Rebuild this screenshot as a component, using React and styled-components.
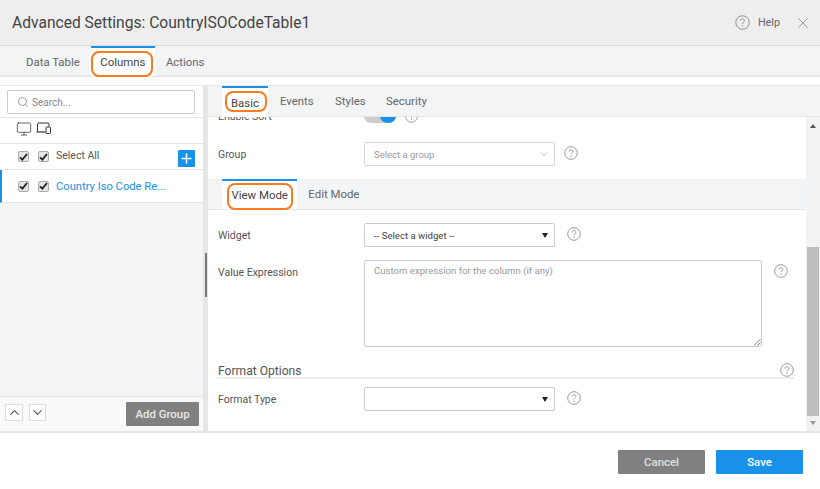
import styled, { createGlobalStyle } from "styled-components"
import { Search, Monitor, X, ChevronUp, ChevronDown, Plus } from "lucide-react"

const GlobalStyle = createGlobalStyle`
  html, body {
    margin: 0;
    padding: 0;
    background: #fff;
    overflow: hidden;
  }
  * {
    box-sizing: border-box;
  }
  body {
    font-family: Roboto, "Liberation Sans", sans-serif;
    color: #444;
  }
`

function HelpIcon({ size = 15 }) {
  return (
    <HelpSvg width={size} height={size} viewBox="0 0 16 16">
      <circle cx="8" cy="8" r="7.2" fill="none" stroke="#8a8a8a" strokeWidth="1" />
      <path d="M5.9 6.2c0-1.3 1-2 2.1-2s2.1.7 2.1 1.9c0 1.7-2.1 1.7-2.1 3.5" fill="none" stroke="#8a8a8a" strokeWidth="1" />
      <circle cx="8" cy="11.6" r=".7" fill="#8a8a8a" />
    </HelpSvg>
  )
}

function DevicesIcon() {
  return (
    <svg width="15" height="13" viewBox="0 0 15 13">
      <path d="M1.5 9.5V2a1 1 0 0 1 1-1h9.5a1 1 0 0 1 1 1v2.5" fill="none" stroke="#333" strokeWidth="1" />
      <path d="M.5 10h9" stroke="#333" strokeWidth="1.2" />
      <rect x="10" y="5" width="4.5" height="6.5" rx=".8" fill="none" stroke="#333" strokeWidth="1" />
    </svg>
  )
}

function Check() {
  return (
    <CheckBox>
      <svg width="9" height="8" viewBox="0 0 9 8">
        <path d="M1 4.3 3.4 6.6 8 1" fill="none" stroke="#222" strokeWidth="1.8" />
      </svg>
    </CheckBox>
  )
}

export default function App() {
  return (
    <Page>
      <GlobalStyle />
      <Header>
        <Title>Advanced Settings: CountryISOCodeTable1</Title>
        <HeaderRight>
          <HelpIcon size={15} />
          <HelpLabel>Help</HelpLabel>
          <CloseBtn><X size={18} strokeWidth={0.8} color="#666" /></CloseBtn>
        </HeaderRight>
      </Header>

      <MainTabs>
        <MainTab>Data Table</MainTab>
        <MainTab $active>
          Columns
          <Oval $l={0} $t={3} $w={62} $h={26} />
        </MainTab>
        <MainTab>Actions</MainTab>
      </MainTabs>

      <Body>
        <Sidebar>
          <SearchBar>
            <SearchBox>
              <Search size={12} strokeWidth={1.4} color="#777" />
              <span>Search...</span>
            </SearchBox>
          </SearchBar>
          <DeviceRow>
            <Monitor size={16} strokeWidth={1.1} color="#333" />
            <DevicesIcon />
          </DeviceRow>
          <ColumnRow>
            <Check />
            <Check />
            <SelectAll>Select All</SelectAll>
            <AddBtn><Plus size={15} strokeWidth={2.6} color="#fff" /></AddBtn>
          </ColumnRow>
          <ColumnRow $active>
            <Check />
            <Check />
            <ColumnName>Country Iso Code Re...</ColumnName>
          </ColumnRow>
          <SidebarFill />
          <SidebarFooter>
            <ArrowBtn $w={18}><ChevronUp size={15} strokeWidth={1.8} color="#555" /></ArrowBtn>
            <ArrowBtn $w={17}><ChevronDown size={15} strokeWidth={1.8} color="#555" /></ArrowBtn>
            <AddGroup>Add Group</AddGroup>
          </SidebarFooter>
        </Sidebar>

        <Gutter><GutterHandle /></Gutter>

        <Panel>
          <SubTabs>
            <SubTab $active $w={46}>
              Basic
              <Oval $l={3} $t={3} $w={42} $h={21} />
            </SubTab>
            <SubTab $w={55}>Events</SubTab>
            <SubTab $w={51}>Styles</SubTab>
            <SubTab>Security</SubTab>
          </SubTabs>

          <ScrollArea>
            <Content>
              <SortRow>
                <Label>Enable Sort</Label>
                <Toggle><Knob /></Toggle>
                <IconSlot $ml={9}><HelpIcon size={13} /></IconSlot>
              </SortRow>
              <GroupRow>
                <Label>Group</Label>
                <GroupSelect>
                  <span>Select a group</span>
                  <ChevronDown size={12} strokeWidth={1.2} color="#999" />
                </GroupSelect>
                <IconSlot $ml={9} $mt={-3}><HelpIcon size={14} /></IconSlot>
              </GroupRow>

              <ModeTabs>
                <ModeTab $active>
                  View Mode
                  <Oval $l={5} $t={2} $w={66} $h={27} />
                </ModeTab>
                <ModeTab>Edit Mode</ModeTab>
              </ModeTabs>

              <WidgetRow>
                <Label>Widget</Label>
                <NativeSelect>
                  <span>-- Select a widget --</span>
                  <Caret />
                </NativeSelect>
                <IconSlot $ml={12} $mt={-3}><HelpIcon size={14} /></IconSlot>
              </WidgetRow>

              <ExpressionRow>
                <ExprLabel>Value Expression</ExprLabel>
                <TextArea>
                  Custom expression for the column (if any)
                  <Grip width="8" height="8" viewBox="0 0 8 8">
                    <path d="M1 7.5 7.5 1M4.5 7.5 7.5 4.5" stroke="#555" strokeWidth=".8" />
                  </Grip>
                </TextArea>
                <IconSlot $ml={12} $mt={4}><HelpIcon size={14} /></IconSlot>
              </ExpressionRow>

              <SectionHead>
                <SectionTitle>Format Options</SectionTitle>
                <IconSlot $mt={4}><HelpIcon size={14} /></IconSlot>
              </SectionHead>

              <FormatRow>
                <Label>Format Type</Label>
                <NativeSelect>
                  <span />
                  <Caret />
                </NativeSelect>
                <IconSlot $ml={12} $mt={-3}><HelpIcon size={14} /></IconSlot>
              </FormatRow>
            </Content>

            <Scrollbar>
              <ScrollArrow $up />
              <ScrollTrack><ScrollThumb /></ScrollTrack>
              <ScrollArrow />
            </Scrollbar>
          </ScrollArea>
        </Panel>
      </Body>

      <Footer>
        <FooterBtn $bg="#808080" $mr={11}>Cancel</FooterBtn>
        <FooterBtn $bg="#1991eb">Save</FooterBtn>
      </Footer>
    </Page>
  )
}

const Page = styled.div`
  width: 820px;
  height: 489px;
  display: flex;
  flex-direction: column;
  background: #fff;
  overflow: hidden;
`

const Header = styled.header`
  height: 46px;
  flex: none;
  display: flex;
  align-items: center;
  justify-content: space-between;
  padding: 0 12px;
  background: #eeeeee;
  border-bottom: 1px solid #dddddd;
`

const Title = styled.h1`
  margin: 0;
  font-size: 15.6px;
  font-weight: 400;
  color: #444;
  white-space: nowrap;
`

const HeaderRight = styled.div`
  display: flex;
  align-items: center;
`

const HelpSvg = styled.svg`
  flex: none;
  display: block;
`

const IconSlot = styled.span`
  flex: none;
  display: block;
  margin-left: ${(p) => p.$ml || 0}px;
  margin-top: ${(p) => p.$mt || 0}px;
`

const HelpLabel = styled.span`
  margin-left: 8px;
  font-size: 10.8px;
  color: #666;
`

const CloseBtn = styled.span`
  margin: 0 -4px 0 14px;
  display: flex;
`

const MainTabs = styled.nav`
  height: 31px;
  flex: none;
  display: flex;
  padding-left: 13px;
  background: #f3f4f6;
  border-bottom: 2px solid #e6e6e6;
`

const MainTab = styled.div`
  position: relative;
  height: 30px;
  padding: ${(p) => (p.$active ? "0 9.5px" : "1px 12px 0 13px")};
  margin: ${(p) => (p.$active ? "0 -2px 0 -1px" : "0")};
  display: flex;
  align-items: center;
  font-size: 11.4px;
  color: ${(p) => (p.$active ? "#444" : "#666")};
  background: ${(p) => (p.$active ? "#fff" : "transparent")};
  border-top: ${(p) => (p.$active ? "2px solid #1991eb" : "none")};
`

const Oval = styled.span`
  position: absolute;
  left: ${(p) => p.$l}px;
  top: ${(p) => p.$t}px;
  width: ${(p) => p.$w}px;
  height: ${(p) => p.$h}px;
  border: 2px solid #f97a1f;
  border-radius: 8px;
  pointer-events: none;
`

const Body = styled.div`
  height: 346px;
  margin-top: 8px;
  flex: none;
  display: flex;
  border-top: 1px solid #e6e6e6;
`

const Sidebar = styled.aside`
  width: 203px;
  flex: none;
  display: flex;
  flex-direction: column;
  background: #f3f4f6;
`

const SearchBar = styled.div`
  height: 32px;
  flex: none;
  padding: 4px 8px 3px 7px;
  background: #fff;
  border-bottom: 1px solid #e6e6e6;
`

const SearchBox = styled.div`
  height: 24px;
  display: flex;
  align-items: center;
  gap: 3px;
  padding-left: 9px;
  font-size: 10px;
  color: #888;
  border: 1px solid #ccc;
  border-radius: 2px;
  background: #fff;
`

const DeviceRow = styled.div`
  height: 26px;
  flex: none;
  display: flex;
  align-items: center;
  gap: 4px;
  padding: 0 0 4px 16px;
  background: #fff;
  border-bottom: 1px solid #e6e6e6;
`

const ColumnRow = styled.div`
  height: ${(p) => (p.$active ? "33px" : "26px")};
  flex: none;
  display: flex;
  align-items: center;
  gap: 9px;
  padding-left: ${(p) => (p.$active ? "16px" : "18px")};
  padding-right: 8px;
  background: #fff;
  border-bottom: 1px solid #e6e6e6;
  border-left: ${(p) => (p.$active ? "2px solid #1991eb" : "none")};
`

const CheckBox = styled.span`
  width: 11px;
  height: 11px;
  flex: none;
  display: flex;
  align-items: center;
  justify-content: center;
  background: #e4e4e4;
  border: 1px solid #aaa;
  border-radius: 2px;
`

const SelectAll = styled.span`
  margin-left: -2px;
  margin-top: -3px;
  font-size: 10.5px;
  color: #555;
  flex: 1;
`

const AddBtn = styled.span`
  width: 17px;
  height: 17px;
  margin-top: 3px;
  display: flex;
  align-items: center;
  justify-content: center;
  background: #1991eb;
  border-radius: 1px;
`

const ColumnName = styled.span`
  margin-left: -2px;
  font-size: 11.2px;
  color: #1991eb;
`

const SidebarFill = styled.div`
  flex: 1;
`

const SidebarFooter = styled.div`
  height: 35px;
  flex: none;
  display: flex;
  align-items: center;
  padding: 0 4px 0 5px;
  gap: 6px;
  background: #f9f9f9;
  border-top: 1px solid #e3e3e3;
`

const ArrowBtn = styled.span`
  width: ${(p) => p.$w}px;
  height: 17px;
  margin-top: -3px;
  display: flex;
  align-items: center;
  justify-content: center;
  background: #fff;
  border: 1px solid #ddd;
`

const AddGroup = styled.span`
  margin-left: auto;
  width: 73px;
  height: 24px;
  display: flex;
  align-items: center;
  justify-content: center;
  font-size: 11.4px;
  font-weight: 500;
  color: #e8e8e8;
  background: #808080;
  border-radius: 1px;
`

const Gutter = styled.div`
  position: relative;
  width: 5px;
  flex: none;
  background: #e6e6e6;
`

const GutterHandle = styled.span`
  position: absolute;
  left: 2px;
  top: 167px;
  width: 2px;
  height: 44px;
  background: #777;
`

const Panel = styled.section`
  flex: 1;
  min-width: 0;
  display: flex;
  flex-direction: column;
`

const SubTabs = styled.nav`
  height: 31px;
  flex: none;
  display: flex;
  padding-left: 14px;
  background: #f3f4f6;
  border-bottom: 1px solid #e6e6e6;
`

const SubTab = styled.div`
  position: relative;
  width: ${(p) => (p.$w ? `${p.$w}px` : "auto")};
  height: ${(p) => (p.$active ? "31px" : "30px")};
  padding-left: ${(p) => (p.$active ? "9px" : "12px")};
  display: flex;
  align-items: center;
  font-size: 11.4px;
  color: ${(p) => (p.$active ? "#444" : "#666")};
  background: ${(p) => (p.$active ? "#fff" : "transparent")};
  border-top: ${(p) => (p.$active ? "2px solid #1991eb" : "none")};
`

const ScrollArea = styled.div`
  flex: 1;
  min-height: 0;
  display: flex;
  overflow: hidden;
`

const Content = styled.div`
  flex: 1;
  min-width: 0;
  display: flex;
  flex-direction: column;
`

const Label = styled.span`
  width: 156px;
  padding-left: 10px;
  flex: none;
  font-size: 10.5px;
  color: #555;
`

const SortRow = styled.div`
  height: 12px;
  margin-top: -7px;
  flex: none;
  display: flex;
  align-items: center;
`

const Toggle = styled.span`
  width: 32px;
  height: 14px;
  flex: none;
  border-radius: 7px;
  background: #ccc;
  position: relative;
`

const Knob = styled.span`
  position: absolute;
  right: 0;
  top: 0;
  width: 16px;
  height: 14px;
  border-radius: 50%;
  background: #1991eb;
`

const GroupRow = styled.div`
  height: 57px;
  flex: none;
  display: flex;
  align-items: center;
  padding-top: 7px;
`

const GroupSelect = styled.div`
  width: 191px;
  height: 24px;
  flex: none;
  display: flex;
  align-items: center;
  justify-content: space-between;
  padding: 0 4px 0 9px;
  font-size: 9.5px;
  color: #999;
  border: 1px solid #d6d6d6;
  border-radius: 2px;
`

const ModeTabs = styled.div`
  height: 31px;
  flex: none;
  display: flex;
  padding-left: 14px;
  background: #f3f4f6;
  border-bottom: 1px solid #e6e6e6;
`

const ModeTab = styled.div`
  position: relative;
  height: 30px;
  padding: 0 ${(p) => (p.$active ? "9.5px" : "11px")};
  display: flex;
  align-items: center;
  font-size: 11.4px;
  color: ${(p) => (p.$active ? "#444" : "#666")};
  background: ${(p) => (p.$active ? "#fff" : "transparent")};
  border-top: ${(p) => (p.$active ? "2px solid #1991eb" : "none")};
`

const WidgetRow = styled.div`
  height: 50px;
  flex: none;
  display: flex;
  align-items: center;
`

const NativeSelect = styled.div`
  width: 191px;
  height: 24px;
  flex: none;
  display: flex;
  align-items: center;
  justify-content: space-between;
  padding: 0 6px 0 9px;
  font-size: 9.6px;
  color: #444;
  border: 1px solid #ccc;
  border-radius: 2px;
`

const Caret = styled.i`
  width: 0;
  height: 0;
  border-left: 3px solid transparent;
  border-right: 3px solid transparent;
  border-top: 5px solid #222;
`

const ExpressionRow = styled.div`
  height: 87px;
  flex: none;
  display: flex;
  align-items: flex-start;
`

const ExprLabel = styled(Label)`
  padding-top: 6px;
`

const TextArea = styled.div`
  position: relative;
  width: 398px;
  height: 87px;
  flex: none;
  padding: 4px 9px;
  font-size: 9.6px;
  color: #999;
  border: 1px solid #ccc;
  border-radius: 2px;
`

const Grip = styled.svg`
  position: absolute;
  right: 0;
  bottom: 0;
`

const SectionHead = styled.div`
  height: 19px;
  margin: 13px 12px 0 9px;
  flex: none;
  display: flex;
  align-items: center;
  justify-content: space-between;
  padding: 0 0 1px 1px;
  font-size: 12.1px;
  color: #555;
  border-bottom: 2px solid #eeeeee;
`

const SectionTitle = styled.span`
  margin-top: 5px;
`

const FormatRow = styled.div`
  height: 24px;
  margin-top: 8px;
  flex: none;
  display: flex;
  align-items: center;
`

const Scrollbar = styled.div`
  width: 14px;
  flex: none;
  display: flex;
  flex-direction: column;
  align-items: center;
  background: #f2f2f2;
`

const ScrollArrow = styled.i`
  width: 0;
  height: 0;
  margin: ${(p) => (p.$up ? "7px 0 5px" : "5px 0 6px")};
  border-left: 3px solid transparent;
  border-right: 3px solid transparent;
  border-top: ${(p) => (p.$up ? "none" : "4px solid #999")};
  border-bottom: ${(p) => (p.$up ? "4px solid #555" : "none")};
`

const ScrollTrack = styled.div`
  flex: 1;
  width: 100%;
  display: flex;
  flex-direction: column;
  justify-content: flex-end;
  align-items: center;
`

const ScrollThumb = styled.div`
  width: 12px;
  height: 169px;
  background: #bdbdbd;
`

const Footer = styled.footer`
  flex: 1;
  display: flex;
  align-items: center;
  justify-content: flex-end;
  padding: 2px 17px 0 0;
  border-top: 2px solid #e6e6e6;
`

const FooterBtn = styled.button`
  width: 87px;
  height: 24px;
  margin-right: ${(p) => p.$mr || 0}px;
  border: none;
  border-radius: 1px;
  font-family: inherit;
  font-size: 11.4px;
  font-weight: 500;
  color: ${(p) => (p.$bg === "#808080" ? "#e0e0e0" : "#fff")};
  background: ${(p) => p.$bg};
`
